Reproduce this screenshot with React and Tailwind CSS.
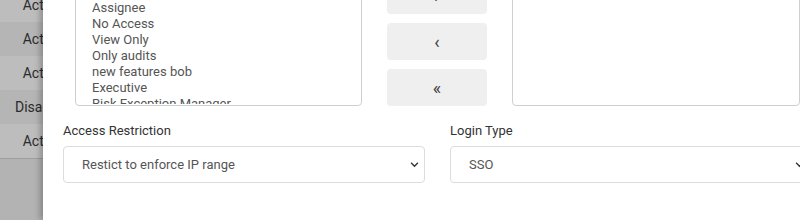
import { useState } from "react";

const rows = [
  { label: "Active", dark: false },
  { label: "Active", dark: true },
  { label: "Active", dark: false },
  { label: "Disabled", dark: true },
  { label: "Active", dark: false },
];

const roles = [
  "Admin",
  "Manager",
  "Assignee",
  "No Access",
  "View Only",
  "Only audits",
  "new features bob",
  "Executive",
  "Risk Exception Manager",
  "Auditor",
];

function Chevron() {
  return (
    <svg width="9" height="9" viewBox="0 0 16 16" className="text-[#333]">
      <path d="M2 5l6 6 6-6" fill="none" stroke="currentColor" strokeWidth="2.4" />
    </svg>
  );
}

function SelectBox({ value }) {
  return (
    <div className="flex h-[37px] items-center justify-between rounded border border-[#dcdcdc] bg-white pl-[18px] pr-[5px] text-[13px] text-[#555]">
      <span>{value}</span>
      <Chevron />
    </div>
  );
}

export default function App() {
  const [restriction] = useState("Restict to enforce IP range");

  return (
    <div className="flex h-[220px] w-[800px] overflow-hidden bg-[#b3b3b3] font-['Roboto',sans-serif]">
      {/* page behind the modal */}
      <div className="w-[43px] shrink-0 overflow-hidden">
        <div className="-mt-[12px] w-[84px]">
          {rows.map((r, i) => (
            <div
              key={i}
              className={`flex h-[34px] items-center justify-center text-[14px] text-[#2b2b2b] ${
                r.dark ? "bg-[#b5b5b5]" : "bg-[#bdbdbd]"
              }`}
            >
              {r.label}
            </div>
          ))}
          <div className="h-px bg-[#9e9e9e]" />
        </div>
      </div>

      {/* modal */}
      <div className="relative z-10 flex-1 overflow-hidden bg-white pl-[20px] shadow-[-3px_0_6px_rgba(0,0,0,0.25)]">
        <div className="w-[790px]">
          <div className="-mt-[69px] flex items-end gap-[25px] pl-[12px]">
            <div className="h-[147px] w-[287px] overflow-hidden rounded border border-[#cfcfcf]">
              <div className="h-[144px] overflow-hidden px-[16px] pt-[8px] text-[13px] leading-[16px] text-[#555]">
                {roles.map((role) => (
                  <div key={role}>{role}</div>
                ))}
              </div>
            </div>
            <div className="flex w-[100px] flex-col gap-[9px]">
              {["»", "›", "‹", "«"].map((g) => (
                <button
                  key={g}
                  className="flex h-[37px] items-center justify-center rounded bg-[#efefef] text-[18px] leading-none text-[#444]"
                >
                  {g}
                </button>
              ))}
            </div>
            <div className="h-[147px] w-[288px] rounded border border-[#cfcfcf]" />
          </div>

          <div className="mt-[17px] grid grid-cols-[362px_360px] gap-[25px]">
            <div>
              <div className="mb-[7px] text-[13px] leading-[16px] text-[#333]">Access Restriction</div>
              <SelectBox value={restriction} />
            </div>
            <div>
              <div className="mb-[7px] text-[13px] leading-[16px] text-[#333]">Login Type</div>
              <SelectBox value="SSO" />
            </div>
          </div>
        </div>
      </div>
    </div>
  );
}
